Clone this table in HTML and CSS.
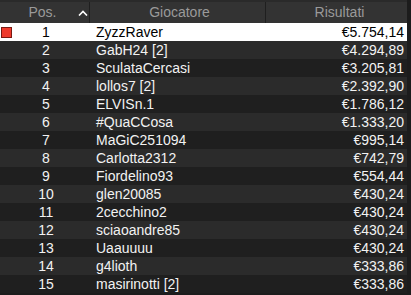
FILE: index.html
```html
<!DOCTYPE html>
<html>
<head>
<meta charset="utf-8">
<link rel="stylesheet" href="styles.css">
</head>
<body>
<div class="frame">
  <div class="table">
    <div class="head">
      <div class="hcell pos">Pos.<svg class="caret" width="10" height="6" viewBox="0 0 10 6"><path d="M1 5.5 L5 1.5 L9 5.5" fill="none" stroke="#fff" stroke-width="1.6"/></svg></div>
      <div class="hcell name">Giocatore</div>
      <div class="hcell res">Risultati</div>
    </div>
    <div class="row sel"><div class="c pos"><span class="mark"></span>1</div><div class="c name">ZyzzRaver</div><div class="c res">€5.754,14</div></div>
    <div class="row"><div class="c pos">2</div><div class="c name">GabH24 [2]</div><div class="c res">€4.294,89</div></div>
    <div class="row"><div class="c pos">3</div><div class="c name">SculataCercasi</div><div class="c res">€3.205,81</div></div>
    <div class="row"><div class="c pos">4</div><div class="c name">lollos7 [2]</div><div class="c res">€2.392,90</div></div>
    <div class="row"><div class="c pos">5</div><div class="c name">ELVISn.1</div><div class="c res">€1.786,12</div></div>
    <div class="row"><div class="c pos">6</div><div class="c name">#QuaCCosa</div><div class="c res">€1.333,20</div></div>
    <div class="row"><div class="c pos">7</div><div class="c name">MaGiC251094</div><div class="c res">€995,14</div></div>
    <div class="row"><div class="c pos">8</div><div class="c name">Carlotta2312</div><div class="c res">€742,79</div></div>
    <div class="row"><div class="c pos">9</div><div class="c name">Fiordelino93</div><div class="c res">€554,44</div></div>
    <div class="row"><div class="c pos">10</div><div class="c name">glen20085</div><div class="c res">€430,24</div></div>
    <div class="row"><div class="c pos">11</div><div class="c name">2cecchino2</div><div class="c res">€430,24</div></div>
    <div class="row"><div class="c pos">12</div><div class="c name">sciaoandre85</div><div class="c res">€430,24</div></div>
    <div class="row"><div class="c pos">13</div><div class="c name">Uaauuuu</div><div class="c res">€430,24</div></div>
    <div class="row"><div class="c pos">14</div><div class="c name">g4lioth</div><div class="c res">€333,86</div></div>
    <div class="row"><div class="c pos">15</div><div class="c name">masirinotti [2]</div><div class="c res">€333,86</div></div>
  </div>
</div>
</body>
</html>
```
FILE: styles.css
```css
html, body {
  margin: 0;
  padding: 0;
  background: #1c1c1c;
}
body {
  width: 411px;
  height: 295px;
  overflow: hidden;
  font-family: "Liberation Sans", Arial, sans-serif;
  font-size: 14px;
}
.frame {
  display: flex;
  width: 411px;
  height: 295px;
  background: #1c1c1c;
}
.table {
  width: 407px;
  display: flex;
  flex-direction: column;
}
.head {
  display: grid;
  grid-template-columns: 90px 176px 141px;
  height: 23px;
  background: #333333;
  border-top: 2px solid #2a2a2a;
  box-sizing: border-box;
}
.hcell {
  color: #9a9a9a;
  display: flex;
  align-items: center;
  justify-content: center;
  border-right: 1px solid #1f1f1f;
  position: relative;
  padding-bottom: 1px;
}
.hcell.res { border-right: none; padding-left: 6px; }
.hcell.name { padding-left: 4px; }
.hcell.pos { padding-right: 4px; }
.caret {
  position: absolute;
  left: 78px;
  top: 8px;
}
.row {
  display: grid;
  grid-template-columns: 90px 176px 141px;
  height: 18px;
  line-height: 18px;
  color: #f2f2f2;
  background: #1f1f1f;
}
.row:nth-child(odd) {
  background: #2b2b2b;
}
.row.sel {
  background: #ffffff;
  color: #000;
}
.c.pos {
  text-align: center;
  padding-left: 2px;
  position: relative;
}
.c.name {
  padding-left: 6px;
}
.c.res {
  text-align: right;
  padding-right: 3px;
}
.mark {
  position: absolute;
  left: 1px;
  top: 4px;
  width: 9px;
  height: 9px;
  background: #ee3a2c;
  border: 1px solid #7a1a12;
}
```
